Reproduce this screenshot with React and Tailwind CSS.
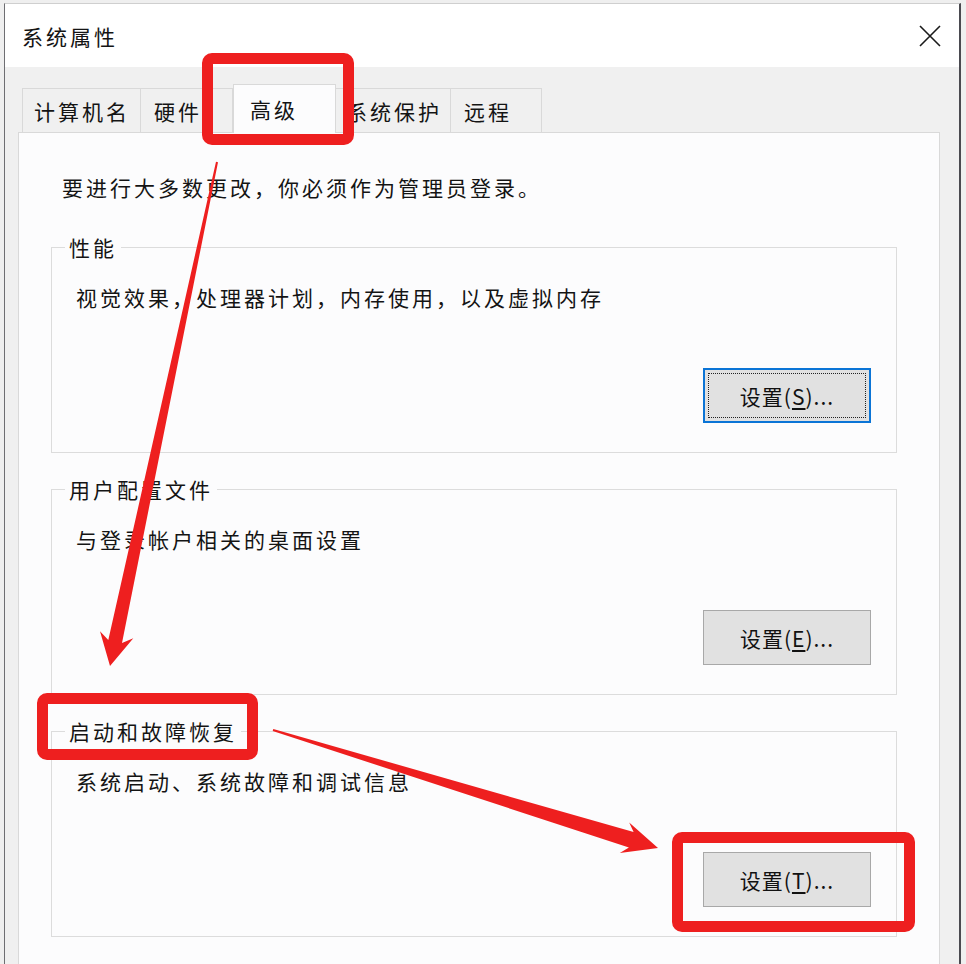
import React from 'react';

const RED = '#ee1f1f';

// tapered annotation arrow: thin tail, wide neck, swept head
function arrowPoints(tail, tip, tailHalf, neckHalf, headHalf, headLen) {
  const dx = tip[0] - tail[0];
  const dy = tip[1] - tail[1];
  const len = Math.hypot(dx, dy);
  const ux = dx / len;
  const uy = dy / len;
  const px = -uy;
  const py = ux;
  const neck = [tip[0] - ux * (headLen - 7), tip[1] - uy * (headLen - 7)];
  const base = [tip[0] - ux * headLen, tip[1] - uy * headLen];
  const pts = [
    [tail[0] + px * tailHalf, tail[1] + py * tailHalf],
    [neck[0] + px * neckHalf, neck[1] + py * neckHalf],
    [base[0] + px * headHalf, base[1] + py * headHalf],
    tip,
    [base[0] - px * headHalf, base[1] - py * headHalf],
    [neck[0] - px * neckHalf, neck[1] - py * neckHalf],
    [tail[0] - px * tailHalf, tail[1] - py * tailHalf],
  ];
  return pts.map((p) => p.map((v) => v.toFixed(1)).join(',')).join(' ');
}

const tabs = [
  { label: '计算机名', cls: 'w-[119px] pl-[11px]' },
  { label: '硬件', cls: 'w-[93px] pl-[13px]' },
  { label: '高级', cls: 'w-[103px] pl-[16px]', active: true },
  { label: '系统保护', cls: 'w-[116px] pl-[10px]' },
  { label: '远程', cls: 'w-[92px] pl-[13px]' },
];

const groups = [
  { title: '性能', desc: '视觉效果，处理器计划，内存使用，以及虚拟内存', key: 'S', focused: true },
  { title: '用户配置文件', desc: '与登录帐户相关的桌面设置', key: 'E' },
  { title: '启动和故障恢复', desc: '系统启动、系统故障和调试信息', key: 'T' },
];

function SettingsButton({ hotkey, focused }) {
  return (
    <button
      className={
        focused
          ? 'w-[168px] h-[55px] bg-[#e1e1e1] border-2 border-[#0a74d6] outline-1 outline-dotted outline-[#222] outline-offset-[-6px] flex items-center justify-center text-[21px] leading-[24px] text-[#111]'
          : 'w-[168px] h-[55px] bg-[#e1e1e1] border border-[#a8a8a8] flex items-center justify-center text-[21px] leading-[24px] text-[#111]'
      }
    >
      <span className="tracking-[1px]">
        设置(<span className="underline underline-offset-[3px]">{hotkey}</span>)...
      </span>
    </button>
  );
}

export default function App() {
  return (
    <div className="relative w-[966px] h-[964px] overflow-hidden bg-[#efefef] pt-[3px] pl-[4px] font-['Noto_Sans_CJK_SC','Noto_Sans',sans-serif] text-[#141414]">
      {/* dialog */}
      <div className="w-[957px] border-t border-t-[#cfcfcf] border-l border-l-[#6e6e72] border-r-2 border-r-[#4a4a50] bg-[#f0f0f0]">
        {/* title bar */}
        <div className="h-[63px] bg-white flex items-center justify-between pl-[17px] pr-[18px]">
          <span className="text-[21px] leading-[24px] tracking-[3px]">系统属性</span>
          <svg width="22" height="22" viewBox="0 0 22 22">
            <path d="M1 1 L21 21 M21 1 L1 21" stroke="#1a1a1a" strokeWidth="1.6" />
          </svg>
        </div>

        {/* body */}
        <div className="pl-[13px]">
          {/* tab row */}
          <div className="h-[65px] flex items-end pl-[4px]">
            {tabs.map((t) =>
              t.active ? (
                <div
                  key={t.label}
                  className={`${t.cls} relative z-10 h-[49px] -mb-px bg-[#fcfcfd] border-t border-x border-[#d9d9d9] flex items-center text-[21px] leading-[24px] tracking-[3px]`}
                >
                  {t.label}
                </div>
              ) : (
                <div
                  key={t.label}
                  className={`${t.cls} h-[44px] -ml-px first:ml-0 bg-[#f0f0f0] border-t border-x border-[#d9d9d9] flex items-center text-[21px] leading-[24px] tracking-[3px]`}
                >
                  {t.label}
                </div>
              )
            )}
          </div>

          {/* tab panel */}
          <div className="w-[922px] h-[900px] border border-[#d9d9d9] bg-[#fcfcfd] pt-[42px]">
            <p className="pl-[43px] text-[21px] leading-[24px] tracking-[3px]">
              要进行大多数更改，你必须作为管理员登录。
            </p>

            <div className="mt-[48px] ml-[32px] flex flex-col gap-[36px]">
              {groups.map((g) => (
                <div
                  key={g.title}
                  className="relative w-[846px] h-[206px] border border-[#dcdcdc] flex flex-col justify-between pt-[37px] pl-[24px] pr-[25px] pb-[29px]"
                >
                  <span className="absolute -top-[13px] left-[13px] px-[4px] bg-[#fcfcfd] text-[21px] leading-[24px] tracking-[3px]">
                    {g.title}
                  </span>
                  <p className="text-[21px] leading-[24px] tracking-[3px]">{g.desc}</p>
                  <div className="self-end">
                    <SettingsButton hotkey={g.key} focused={g.focused} />
                  </div>
                </div>
              ))}
            </div>
          </div>
        </div>
      </div>

      {/* red annotation boxes */}
      <div className="absolute left-[202px] top-[53px] w-[152px] h-[92px] border-[11px] border-[#ee1f1f] rounded-[10px]" />
      <div className="absolute left-[37px] top-[693px] w-[221px] h-[67px] border-[11px] border-[#ee1f1f] rounded-[10px]" />
      <div className="absolute left-[672px] top-[832px] w-[243px] h-[100px] border-[11px] border-[#ee1f1f] rounded-[10px]" />

      {/* red annotation arrows */}
      <svg className="absolute inset-0 pointer-events-none" width="966" height="964">
        <polygon points={arrowPoints([217, 162], [110, 666], 1, 7, 17, 32)} fill={RED} />
        <polygon points={arrowPoints([273, 730], [658, 848], 1, 8, 16, 35)} fill={RED} />
      </svg>
    </div>
  );
}
